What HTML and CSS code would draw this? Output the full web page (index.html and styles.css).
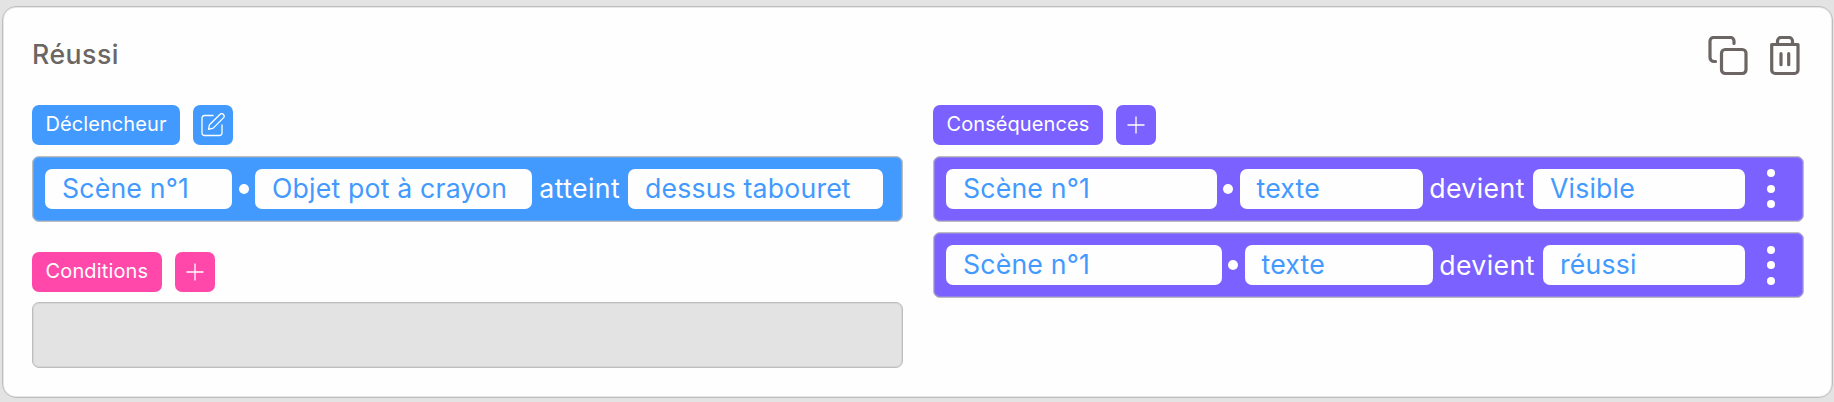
FILE: index.html
```html
<!DOCTYPE html>
<html lang="fr">

<head>
    <meta charset="UTF-8">
    <meta name="viewport" content="width=device-width, initial-scale=1.0">
    <title>Réussi</title>
    <link rel="stylesheet" href="styles.css">
</head>

<body>
    <div class="card">
        <div class="card-header">
            <h2>Réussi</h2>
            <div class="actions">
                <!-- Duplicate -->
                <svg class="icon-copy" viewBox="0 0 40 40">
                    <path d="M7.500 25.500H6A4 4 0 0 1 2 21.500V5A3.500 3.500 0 0 1 5.500 1.500H22.500A3.500 3.500 0 0 1 26 5V7.500" />
                    <rect x="13.500" y="13.500" width="24.500" height="24" rx="3.700" />
                </svg>
                <!-- Delete -->
                <svg class="icon-trash" viewBox="0 0 30 40">
                    <path d="M1.700 8.500H28V34A3.500 3.500 0 0 1 24.500 37.500H5.200A3.500 3.500 0 0 1 1.700 34Z" />
                    <path d="M7.500 8.500V5A3.500 3.500 0 0 1 11 1.500H19A3.500 3.500 0 0 1 22.500 5V8.500M11 17.700V28.700M18.700 17.700V28.700" />
                </svg>
            </div>
        </div>

        <div class="columns">
            <div class="column">
                <div class="section-title trigger">
                    <span class="tag">Déclencheur</span>
                    <button class="square" type="button">
                        <svg class="icon-edit" viewBox="0 0 24 24">
                            <path d="M12.500 2.500H3.500A2.500 2.500 0 0 0 1 5V20A2.500 2.500 0 0 0 3.500 22.500H18.500A2.500 2.500 0 0 0 21 20V11.500" />
                            <path d="M7.500 16.300L8.500 11.700L18.900 1.500A2.350 2.350 0 0 1 22.400 4.900L12.200 15.100Z" />
                        </svg>
                    </button>
                </div>
                <div class="row trigger">
                    <span class="field w-scene">Scène n°1</span>
                    <span class="dot"></span>
                    <span class="field w-object">Objet pot à crayon</span>
                    <span class="verb">atteint</span>
                    <span class="field w-target">dessus tabouret</span>
                </div>

                <div class="section-title condition">
                    <span class="tag">Conditions</span>
                    <button class="square" type="button">
                        <svg class="icon-plus" viewBox="0 0 18 18">
                            <path d="M9 0.500V17.500M0.500 9H17.500" />
                        </svg>
                    </button>
                </div>
                <div class="row empty"></div>
            </div>

            <div class="column">
                <div class="section-title consequence">
                    <span class="tag">Conséquences</span>
                    <button class="square" type="button">
                        <svg class="icon-plus" viewBox="0 0 18 18">
                            <path d="M9 0.500V17.500M0.500 9H17.500" />
                        </svg>
                    </button>
                </div>
                <div class="row consequence first">
                    <span class="field scene">Scène n°1</span>
                    <span class="dot"></span>
                    <span class="field element">texte</span>
                    <span class="verb">devient</span>
                    <span class="field state">Visible</span>
                    <span class="menu"><i></i><i></i><i></i></span>
                </div>
                <div class="row consequence second">
                    <span class="field scene">Scène n°1</span>
                    <span class="dot"></span>
                    <span class="field element">texte</span>
                    <span class="verb">devient</span>
                    <span class="field state">réussi</span>
                    <span class="menu"><i></i><i></i><i></i></span>
                </div>
            </div>
        </div>
    </div>
</body>

</html>
```
FILE: styles.css
```css
* {
    margin: 0;
    padding: 0;
    box-sizing: border-box;
}

body {
    height: 402px;
    padding: 6px 1px 4px 2px;
    background: #e3e3e3;
    font-family: "Inter", sans-serif;
    overflow: hidden;
}

.card {
    height: 392px;
    padding: 29px 28px 0 29px;
    background: #fefefe;
    border: 1px solid #bdbdbd;
    border-radius: 14px;
    box-shadow: inset 0 0 0 1px rgba(189, 189, 189, 0.35);
}

.card-header {
    display: flex;
    justify-content: space-between;
    height: 69px;
}

h2 {
    font-size: 26.67px;
    font-weight: 500;
    line-height: 37px;
    letter-spacing: 0.5px;
    color: #6b6663;
}

.actions {
    display: flex;
    gap: 21.5px;
    padding-right: 4.5px;
}

.actions svg {
    height: 40px;
    fill: none;
    stroke: #6b6663;
    stroke-width: 3.2;
    stroke-linecap: round;
    stroke-linejoin: round;
}

.icon-copy {
    width: 40px;
}

.icon-trash {
    width: 30px;
}

.columns {
    display: grid;
    grid-template-columns: 1fr 1fr;
    gap: 30px;
}

/* Section titles */
.section-title {
    display: flex;
    gap: 13px;
    height: 40px;
    margin-bottom: 10.5px;
}

.tag,
.square {
    height: 40px;
    border: none;
    border-radius: 7px;
    color: white;
}

.tag {
    padding: 0 13.5px;
    font-size: 20px;
    line-height: 38px;
    letter-spacing: 0.08px;
}

.condition .tag {
    width: 130px;
    letter-spacing: 0.15px;
}

.square {
    display: flex;
    align-items: center;
    justify-content: center;
    width: 40px;
}

.square svg {
    fill: none;
    stroke: white;
    stroke-width: 1.3;
    stroke-linejoin: round;
}

.icon-edit {
    width: 24px;
    height: 24px;
}

.icon-plus {
    width: 18px;
    height: 18px;
}

.trigger .tag,
.trigger .square,
.row.trigger {
    background: #429aff;
}

.condition .tag,
.condition .square {
    background: #ff48a9;
}

.consequence .tag,
.consequence .square,
.row.consequence {
    background: #7b61ff;
}

/* Rows */
.row {
    display: flex;
    align-items: center;
    height: 66px;
    padding-left: 12px;
    border: 1px solid #bdbdbd;
    border-radius: 7px;
    box-shadow: inset 0 0 0 1px rgba(189, 189, 189, 0.35);
    font-size: 26.67px;
}

.row.trigger {
    margin-bottom: 30px;
}

.row.first {
    margin-bottom: 10.5px;
}

.row.empty {
    background: #e3e3e3;
}

.field {
    height: 40px;
    padding-left: 17px;
    border-radius: 7px;
    background: #fefefe;
    color: #429aff;
    line-height: 39px;
    letter-spacing: 0.18px;
    white-space: nowrap;
}

.dot {
    width: 10px;
    height: 10px;
    margin: 0 6.5px;
    border-radius: 50%;
    background: white;
}

.verb {
    color: white;
    line-height: 39px;
    letter-spacing: 0.4px;
    text-align: center;
}

.trigger .verb {
    width: 96.5px;
}

.consequence .verb {
    width: 110px;
    padding-right: 2px;
}

.w-scene {
    width: 187px;
}

.w-object {
    width: 276.5px;
}

.w-target {
    width: 255px;
}

.first .scene {
    width: 270.5px;
}

.first .element {
    width: 183.5px;
}

.first .state {
    width: 211.5px;
}

.second .scene {
    width: 275.5px;
}

.second .element {
    width: 188.5px;
}

.second .state {
    width: 201.5px;
}

.menu {
    display: flex;
    flex-direction: column;
    gap: 7.5px;
    margin-left: 22.5px;
}

.menu i {
    width: 8px;
    height: 8px;
    border-radius: 50%;
    background: white;
}
```
